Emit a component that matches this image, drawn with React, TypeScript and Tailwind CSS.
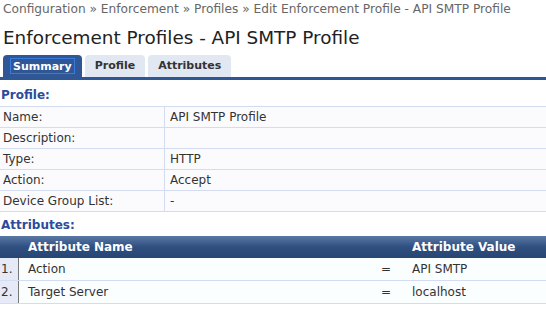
import { FunctionComponent } from 'react';

const profileRows: [string, string][] = [
  ['Name:', 'API SMTP Profile'],
  ['Description:', ''],
  ['Type:', 'HTTP'],
  ['Action:', 'Accept'],
  ['Device Group List:', '-'],
];

const attributes = [
  { name: 'Action', value: 'API SMTP' },
  { name: 'Target Server', value: 'localhost' },
];

const Tab: FunctionComponent<{ label: string; active?: boolean }> = ({ label, active }) =>
  active ? (
    <div className="h-[22px] px-[7px] pt-[3px] rounded-t-[4px] bg-[#2f5796]">
      <div className="h-[16px] px-[2px] border border-[#3a7ae0] flex items-center text-white text-[11px] font-bold leading-none">
        {label}
      </div>
    </div>
  ) : (
    <div className="h-[22px] px-[10px] rounded-t-[4px] bg-[#e1e8f2] flex items-center text-[#333] text-[11px] font-bold">
      {label}
    </div>
  );

export const App: FunctionComponent = () => {
  return (
    <div className="w-[546px] h-[331px] bg-white overflow-hidden font-['DejaVu_Sans',Verdana,sans-serif] text-[#333]">
      <div className="pl-[3px] pt-[1px] h-[16px] text-[12.2px] text-[#666] leading-[16px] whitespace-nowrap">
        Configuration » Enforcement » Profiles » Edit Enforcement Profile - API SMTP Profile
      </div>
      <div className="pl-[3px] mt-[9px] text-[18.4px] leading-[26px] text-[#222] whitespace-nowrap">
        Enforcement Profiles - API SMTP Profile
      </div>
      <div className="mt-[4px] pl-[3px] flex gap-[3px] items-end">
        <Tab label="Summary" active />
        <Tab label="Profile" />
        <Tab label="Attributes" />
      </div>
      <div className="h-[3px] bg-[#2f5796]" />

      <div className="pl-[1px] mt-[6px] h-[18px] text-[12px] font-bold text-[#2b4c9c] leading-[18px]">Profile:</div>
      <div className="mt-[2px] border-t border-[#d4dcf2]">
        {profileRows.map(([label, value]) => (
          <div key={label} className="flex h-[21px] border-b border-[#d4dcf2] bg-[#fbfbfe] text-[12px] leading-[20px]">
            <div className="w-[165px] pl-[3px] border-r border-[#d4dcf2]">{label}</div>
            <div className="pl-[5px]">{value}</div>
          </div>
        ))}
      </div>

      <div className="pl-[1px] mt-[4px] h-[18px] text-[12px] font-bold text-[#2b4c9c] leading-[18px]">Attributes:</div>
      <div className="mt-[2px]">
        <div className="flex h-[22px] items-center bg-gradient-to-b from-[#5b79a6] via-[#2f4f80] to-[#284674] text-white text-[12px] font-bold">
          <div className="w-[28px]" />
          <div className="flex-1">Attribute Name</div>
          <div className="w-[134px]">Attribute Value</div>
        </div>
        {attributes.map((a, i) => (
          <div key={a.name} className="flex h-[23px] border-b border-[#d4dcf2] bg-[#fafeff] text-[12px] leading-[22px]">
            <div className="w-[19px] pl-[1px] bg-[#e6eaf6] border-r border-[#777]">{i + 1}.</div>
            <div className="pl-[9px] w-[362px]">{a.name}</div>
            <div className="w-[31px]">=</div>
            <div>{a.value}</div>
          </div>
        ))}
      </div>
    </div>
  );
};

export default App;
